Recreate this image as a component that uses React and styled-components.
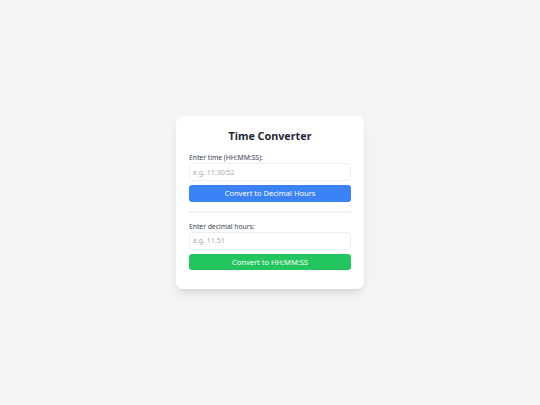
import React, { useState } from "react";
import styled, { createGlobalStyle } from "styled-components";

const GlobalStyle = createGlobalStyle`
  html, body {
    margin: 0;
    padding: 0;
    background: #f3f4f6;
    font-family: "Noto Sans", "Open Sans", sans-serif;
  }
`;

const Page = styled.div`
  width: 540px;
  height: 405px;
  display: flex;
  align-items: center;
  justify-content: center;
`;

const Card = styled.div`
  width: 188px;
  box-sizing: border-box;
  padding: 13px 13px 19px;
  background: #ffffff;
  border-radius: 7px;
  box-shadow: 0 6px 10px -2px rgba(0, 0, 0, 0.1), 0 3px 5px -3px rgba(0, 0, 0, 0.08);
`;

const Title = styled.h1`
  margin: 0 0 9px;
  font-size: 10.75px;
  line-height: 15px;
  font-weight: 700;
  text-align: center;
  color: #1f2937;
`;

const Section = styled.div`
  display: flex;
  flex-direction: column;
`;

const Label = styled.label`
  font-size: 6.75px;
  line-height: 9px;
  color: #374151;
  margin-bottom: 1px;
`;

const Input = styled.input`
  box-sizing: border-box;
  height: 18px;
  padding: 0 3px;
  border: 1px solid #eceef1;
  border-radius: 3px;
  font-family: inherit;
  font-size: 7px;
  color: #374151;
  outline: none;

  &::placeholder {
    color: #a3a9b3;
  }
`;

const Button = styled.button`
  margin-top: 4px;
  height: 16.5px;
  border: none;
  border-radius: 3px;
  background: ${(p) => p.$color};
  color: #ffffff;
  font-family: inherit;
  font-size: 7.5px;
  cursor: pointer;
`;

const Divider = styled.hr`
  margin: 9px 0 9px;
  border: none;
  border-top: 2px solid #eff0f2;
`;

const toDecimal = (s) => {
  const [h = 0, m = 0, sec = 0] = s.split(":").map(Number);
  return (h + m / 60 + sec / 3600).toFixed(2);
};

const toTime = (d) => {
  const total = Math.round(parseFloat(d) * 3600);
  const pad = (n) => String(n).padStart(2, "0");
  return `${pad(Math.floor(total / 3600))}:${pad(Math.floor((total % 3600) / 60))}:${pad(total % 60)}`;
};

export default function App() {
  const [time, setTime] = useState("");
  const [hours, setHours] = useState("");

  return (
    <>
      <GlobalStyle />
      <Page>
        <Card>
          <Title>Time Converter</Title>
          <Section>
            <Label>Enter time (HH:MM:SS):</Label>
            <Input
              placeholder="e.g. 11:30:52"
              value={time}
              onChange={(e) => setTime(e.target.value)}
            />
            <Button $color="#3b82f6" onClick={() => time && setHours(toDecimal(time))}>
              Convert to Decimal Hours
            </Button>
          </Section>
          <Divider />
          <Section>
            <Label>Enter decimal hours:</Label>
            <Input
              placeholder="e.g. 11.51"
              value={hours}
              onChange={(e) => setHours(e.target.value)}
            />
            <Button $color="#22c55e" onClick={() => hours && setTime(toTime(hours))}>
              Convert to HH:MM:SS
            </Button>
          </Section>
        </Card>
      </Page>
    </>
  );
}
